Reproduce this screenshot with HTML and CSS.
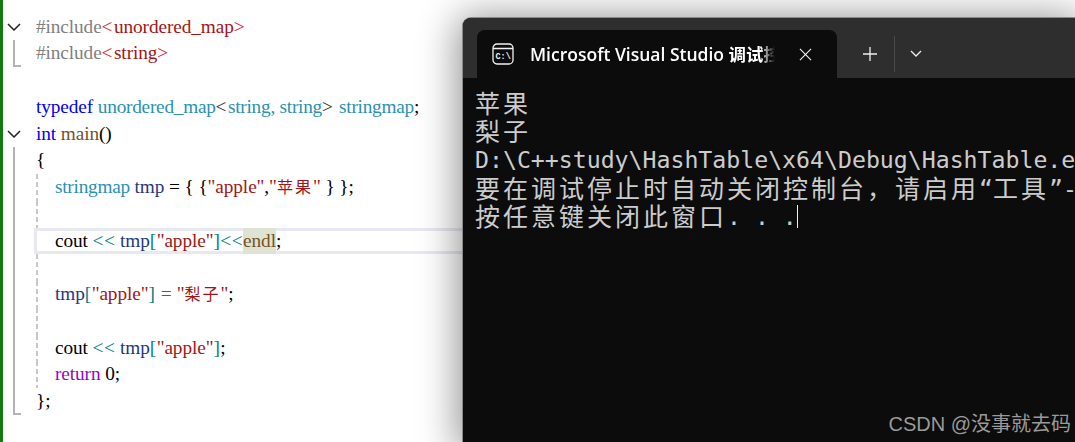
FILE: index.html
```html
<!DOCTYPE html>
<html lang="zh">
<head>
<meta charset="utf-8">
<title>HashTable</title>
<link rel="stylesheet" href="styles.css">
</head>
<body>
<main class="editor">
  <div class="row"><span class="fold"><svg class="chev" viewBox="0 0 14 8"><path d="M1 1l6 6 6-6"/></svg></span><code class="code"><span class="pp">#include</span><span class="ang">&lt;</span><span class="str">unordered_map</span><span class="ang">&gt;</span></code></div>
  <div class="row"><span class="fold end"></span><code class="code"><span class="pp">#include</span><span class="ang">&lt;</span><span class="str">string</span><span class="ang">&gt;</span></code></div>
  <div class="row"><span class="fold"></span><code class="code"></code></div>
  <div class="row"><span class="fold"></span><code class="code"><span class="kw">typedef</span> <span class="ty">unordered_map</span><span class="dk">&lt;</span><span class="ty">string, string</span><span class="dk">&gt;</span> <span class="ty">stringmap</span>;</code></div>
  <div class="row"><span class="fold"><svg class="chev" viewBox="0 0 14 8"><path d="M1 1l6 6 6-6"/></svg></span><code class="code"><span class="kw">int</span> <span class="fn">main</span>()</code></div>
  <div class="row"><span class="fold bar"></span><code class="code">{</code></div>
  <div class="row"><span class="fold bar"></span><code class="code guide"><span class="ty">stringmap</span> <span class="var">tmp</span> = { {<span class="str">"apple"</span>,<span class="str">"<span class="han">苹果</span>"</span> } };</code></div>
  <div class="row"><span class="fold bar"></span><code class="code guide"></code></div>
  <div class="row"><span class="fold bar"></span><code class="code guide current">cout <span class="op">&lt;&lt;</span> <span class="var">tmp</span><span class="op">[</span><span class="str">"apple"</span><span class="op">]&lt;&lt;</span><span class="hit">endl</span>;</code></div>
  <div class="row"><span class="fold bar"></span><code class="code guide"></code></div>
  <div class="row"><span class="fold bar"></span><code class="code guide"><span class="var">tmp</span><span class="op">[</span><span class="str">"apple"</span><span class="op">] =</span> <span class="str">"<span class="han">梨子</span>"</span>;</code></div>
  <div class="row"><span class="fold bar"></span><code class="code guide"></code></div>
  <div class="row"><span class="fold bar"></span><code class="code guide">cout <span class="op">&lt;&lt;</span> <span class="var">tmp</span><span class="op">[</span><span class="str">"apple"</span><span class="op">]</span>;</code></div>
  <div class="row"><span class="fold bar"></span><code class="code guide"><span class="ret">return</span> 0;</code></div>
  <div class="row"><span class="fold end"></span><code class="code">};</code></div>
</main>

<section class="terminal">
  <header class="titlebar">
    <div class="tab">
      <svg class="tab-icon" viewBox="0 0 22 22"><rect x="1" y="1" width="20" height="20" rx="4"/><path d="M1 5.500h20"/><text x="3.500" y="16" class="prompt">C:\</text></svg>
      <span class="tab-title">Microsoft Visual Studio 调试控制台</span>
      <svg class="tab-close" viewBox="0 0 14 14"><path d="M1 1l12 12M13 1L1 13"/></svg>
    </div>
    <svg class="plus" viewBox="0 0 16 16"><path d="M8 1v14M1 8h14"/></svg>
    <span class="sep"></span>
    <svg class="more" viewBox="0 0 12 7"><path d="M1 1l5 5 5-5"/></svg>
  </header>
  <div class="console">
    <div class="ln"><span class="wide">苹果</span></div>
    <div class="ln"><span class="wide">梨子</span></div>
    <div class="ln">D:\C++study\HashTable\x64\Debug\HashTable.exe</div>
    <div class="ln"><span class="wide">要在调试停止时自动关闭控制台，请启用</span>“<span class="wide">工具</span>”-&gt;“<span class="wide">选项</span>”</div>
    <div class="ln"><span class="wide">按任意键关闭此窗口</span>. . .<span class="caret"></span></div>
  </div>
  <span class="mark">CSDN @没事就去码</span>
</section>
</body>
</html>
```
FILE: styles.css
```css
html, body {
  margin: 0;
  height: 100%;
  overflow: hidden;
  background: #fff;
}
body {
  position: relative;
  width: 1075px;
  height: 442px;
}

/* editor */
.editor {
  box-sizing: border-box;
  height: 442px;
  padding-top: 13.6px;
  border-left: 3px solid #107c10;
  font: 19.3px/26.75px "Liberation Serif", "Noto Sans CJK SC", serif;
  letter-spacing: -0.1px;
  color: #000;
}
.row {
  display: flex;
  height: 26.75px;
}
.fold {
  position: relative;
  flex: 0 0 33px;
  box-sizing: border-box;
}
.fold.bar::before,
.fold.end::before {
  content: "";
  position: absolute;
  left: 10px;
  top: 0;
  bottom: 0;
  width: 2px;
  background: #b4b4b4;
}
.fold.end::after {
  content: "";
  position: absolute;
  left: 10px;
  bottom: 0;
  width: 8px;
  height: 2px;
  background: #b4b4b4;
}
.chev {
  display: block;
  width: 14px;
  height: 8px;
  margin: 9px 0 0 4px;
  fill: none;
  stroke: #222;
  stroke-width: 1.5;
}
.code {
  flex: 1;
  font: inherit;
  white-space: pre;
}
.guide {
  box-sizing: border-box;
  padding-left: 19px;
  background: repeating-linear-gradient(#c8c8c8 0 5px, transparent 5px 8px) 0 0 / 2px 100% no-repeat;
}
.current {
  box-sizing: border-box;
  margin-left: -2px;
  padding-left: 21px;
  background: none;
  box-shadow: inset 0 3px 0 #e8e8f0, inset 0 -3px 0 #e8e8f0, inset 3px 0 0 #e8e8f0;
}
.pp { color: #808080; }
.ang { color: #e0202a; letter-spacing: 1.5px; }
.str { color: #a31515; }
.kw { color: #0000ff; }
.ty { color: #2b91af; letter-spacing: -0.25px; }
.dk { color: #303030; letter-spacing: 1.5px; }
.fn { color: #74531f; }
.var { color: #1f377f; }
.op { color: #008080; letter-spacing: 0.5px; }
.ret { color: #8f08c4; }
.han {
  font-size: 16px;
  letter-spacing: 2px;
}
.hit {
  display: inline-block;
  color: #74531f;
  background: #dfe3d3;
}

/* terminal window */
.terminal {
  position: absolute;
  left: 463px;
  top: 18px;
  right: 0;
  bottom: 0;
  overflow: hidden;
  border-radius: 8px 0 0 0;
  background: #0c0c0c;
  box-shadow: 0 0 0 1px #8a8a8a, 0 4px 38px 6px rgba(0, 0, 0, 0.42);
}
.titlebar {
  display: flex;
  align-items: flex-end;
  height: 60px;
  background: #2e2e2e;
  color: #fff;
}
.tab {
  display: flex;
  align-items: center;
  box-sizing: border-box;
  width: 360px;
  height: 48px;
  margin-left: 14px;
  padding: 0 0 0 15px;
  background: #0c0c0c;
  border-radius: 8px 8px 0 0;
}
.tab-icon {
  flex: none;
  width: 22px;
  height: 22px;
  fill: none;
  stroke: #f2f2f2;
  stroke-width: 1.300;
}
.prompt {
  font: 700 8.500px "Liberation Mono", monospace;
  fill: #f2f2f2;
  stroke: none;
}
.tab-title {
  width: 245px;
  margin-left: 16px;
  overflow: hidden;
  white-space: nowrap;
  font: 600 17.5px/24px "Open Sans", "Noto Sans CJK SC", sans-serif;
  color: #fff;
  mask-image: linear-gradient(to right, #000 94%, transparent);
}
.tab-close {
  flex: none;
  width: 13px;
  height: 13px;
  margin-left: 24px;
  fill: none;
  stroke: #f0f0f0;
  stroke-width: 1.200;
}
.plus {
  width: 16px;
  height: 16px;
  margin: 0 0 16px 25px;
  fill: none;
  stroke: #f0f0f0;
  stroke-width: 1.300;
}
.sep {
  width: 1px;
  height: 36px;
  margin: 0 0 6px 16px;
  background: #4a4a4a;
}
.more {
  width: 12px;
  height: 7px;
  margin: 0 0 21px 15px;
  fill: none;
  stroke: #f0f0f0;
  stroke-width: 1.300;
}
.console {
  padding: 12px 0 0 12px;
  font: 23.200px/28.200px "DejaVu Sans Mono", "Noto Sans CJK SC", monospace;
  color: #cccccc;
  white-space: nowrap;
}
.ln {
  height: 28.200px;
}
.wide {
  font-family: "Noto Sans CJK SC", sans-serif;
  font-size: 25px;
  line-height: 16px;
  letter-spacing: 3px;
  vertical-align: -1px;
}
.caret {
  display: inline-block;
  width: 1px;
  height: 23px;
  vertical-align: -3px;
  background: #f0f0f0;
}
.mark {
  position: absolute;
  right: 4px;
  bottom: 6px;
  font: 20px/24px "Liberation Sans", "Noto Sans CJK SC", sans-serif;
  color: #9a9a9a;
}
```
